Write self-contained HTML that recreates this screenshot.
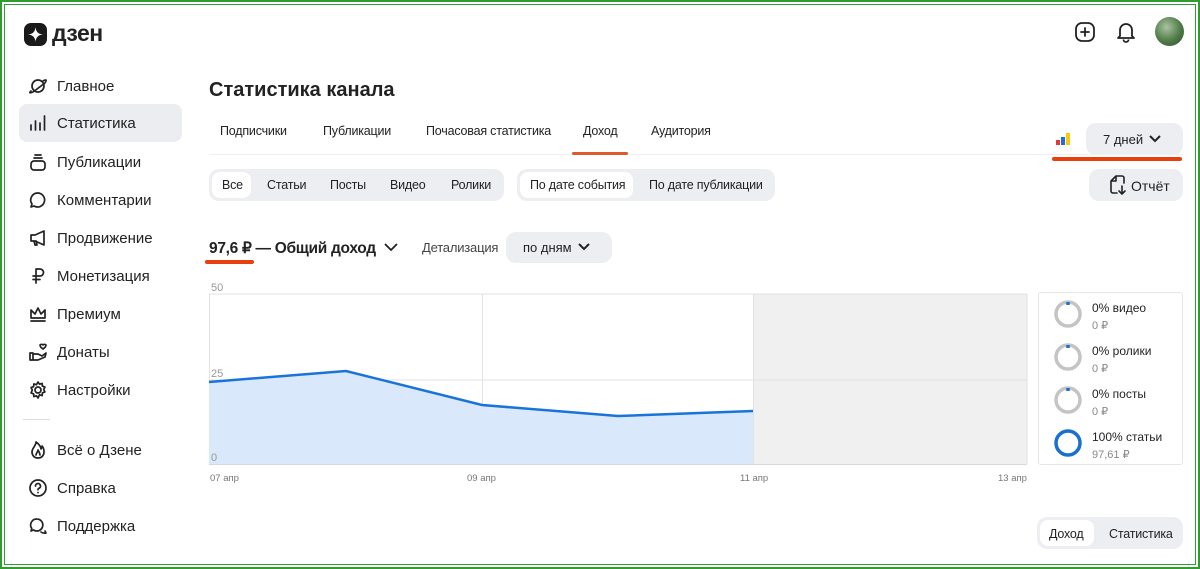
<!DOCTYPE html>
<html><head><meta charset="utf-8">
<style>
*{box-sizing:border-box;margin:0;padding:0}
body{width:1200px;height:569px;overflow:hidden;background:#fff;font-family:"Liberation Sans",sans-serif;color:#222;position:relative}
.frame{position:absolute;inset:0;border:2px solid #2e9e2e}
.frame2{position:absolute;inset:4px;border:1px solid #2e9e2e}
.a{position:absolute;white-space:nowrap}
.nav{position:absolute;left:19px;width:163px;height:38px;display:flex;align-items:center;font-size:15px;color:#222}
.nav svg{position:absolute;left:9px;width:20px;height:20px;fill:none;stroke:#222;stroke-width:1.7;stroke-linecap:round;stroke-linejoin:round}
.nav span{position:absolute;left:38px}
.pill{position:absolute;background:#eceef1;border-radius:10px}
.chip{position:absolute;font-size:12.5px;color:#222;letter-spacing:-0.2px}
.tab{position:absolute;font-size:12.5px;top:124px;letter-spacing:-0.2px}
.w{background:#fff;border-radius:8px}
.s{font-size:11px;color:#888}
</style></head><body>
<div class="frame"></div><div class="frame2"></div>

<div class="a" style="left:24px;top:23px;width:23px;height:23px;background:#1a1a1a;border-radius:7px"></div>
<svg class="a" style="left:24px;top:23px" width="23" height="23" viewBox="0 0 23 23"><path d="M11.5 4 Q12 11 19 11.5 Q12 12 11.5 19 Q11 12 4 11.5 Q11 11 11.5 4Z" fill="#fff"/></svg>
<div class="a" style="left:52px;top:20px;font-size:23px;font-weight:bold;letter-spacing:-0.5px">дзен</div>

<div class="nav" style="top:67px"><svg viewBox="0 0 20 20"><circle cx="10" cy="10" r="6"/><path d="M3 15 Q0 18 5 16 L17 7 Q20 2 15 5"/></svg><span>Главное</span></div>
<div class="nav" style="top:104px;background:#ecedf0;border-radius:8px"><svg viewBox="0 0 20 20"><path d="M3 17v-5M7.5 17v-9M12 17v-7M16.5 17V3"/></svg><span>Статистика</span></div>
<div class="nav" style="top:143px"><svg viewBox="0 0 20 20"><rect x="3" y="9" width="14" height="9" rx="3"/><path d="M6 6h8M7 3h6"/></svg><span>Публикации</span></div>
<div class="nav" style="top:181px"><svg viewBox="0 0 20 20"><path d="M10 3a7 7 0 1 1-4 13l-3 1 1-3A7 7 0 0 1 10 3z"/></svg><span>Комментарии</span></div>
<div class="nav" style="top:219px"><svg viewBox="0 0 20 20"><path d="M3 7h4l9-4v14l-9-4H3zM6 13l1 4h2l-1-4"/></svg><span>Продвижение</span></div>
<div class="nav" style="top:257px"><svg viewBox="0 0 20 20"><path d="M8 17V3h4a3.5 3.5 0 0 1 0 7H5M5 13.5h7"/></svg><span>Монетизация</span></div>
<div class="nav" style="top:295px"><svg viewBox="0 0 20 20"><path d="M3 6l4 4 3-6 3 6 4-4v8H3zM3 17h14"/></svg><span>Премиум</span></div>
<div class="nav" style="top:333px"><svg viewBox="0 0 20 20"><path d="M2 11h3v7H2zM5 12h5l4 2 4-3-1 4-7 3H5M12 3a2 2 0 0 1 3 0 2 2 0 0 1 3 0c0 2-3 4-3 4s-3-2-3-4z"/></svg><span>Донаты</span></div>
<div class="nav" style="top:371px"><svg viewBox="0 0 20 20"><circle cx="10" cy="10" r="3"/><path d="M10 2l1.5 2.2 2.6-.8.3 2.7 2.5 1-1.2 2.4 1.2 2.4-2.5 1-.3 2.7-2.6-.8L10 18l-1.5-2.2-2.6.8-.3-2.7-2.5-1L4.3 10 3.1 7.6l2.5-1 .3-2.7 2.6.8z"/></svg><span>Настройки</span></div>
<div class="a" style="left:23px;top:419px;width:27px;height:1px;background:#ddd"></div>
<div class="nav" style="top:431px"><svg viewBox="0 0 20 20"><path d="M10 18c-4 0-6-3-6-6 0-4 4-6 4-10 3 2 5 5 5 7 1-1 1-2 1-3 2 2 2 4 2 6 0 3-2 6-6 6zM8 15c0-2 2-3 2-5 1 2 2 3 2 5"/></svg><span>Всё о Дзене</span></div>
<div class="nav" style="top:469px"><svg viewBox="0 0 20 20"><circle cx="10" cy="10" r="8"/><path d="M7.5 8a2.5 2.5 0 1 1 3.5 2.3c-.7.3-1 .8-1 1.5M10 14.5v.2"/></svg><span>Справка</span></div>
<div class="nav" style="top:507px"><svg viewBox="0 0 20 20"><path d="M9 3a6 6 0 1 1-3.5 11L3 15l.8-2.5A6 6 0 0 1 9 3zM13 16q2 1.5 5 1l-1-2"/></svg><span>Поддержка</span></div>

<svg class="a" style="left:1074px;top:21px" width="22" height="22" viewBox="0 0 22 22" fill="none" stroke="#222" stroke-width="1.8" stroke-linecap="round"><rect x="2" y="2" width="18" height="18" rx="6"/><path d="M11 7v8M7 11h8"/></svg>
<svg class="a" style="left:1116px;top:21px" width="20" height="22" viewBox="0 0 20 22" fill="none" stroke="#222" stroke-width="1.8" stroke-linejoin="round"><path d="M4 15V9a6 6 0 0 1 12 0v6l2 2H2z M7.5 18.5a2.5 2.5 0 0 0 5 0"/></svg>
<div class="a" style="left:1155px;top:17px;width:29px;height:29px;border-radius:50%;background:radial-gradient(circle at 40% 35%,#a9c3a1,#4f7a47 55%,#2e4f2a)"></div>

<div class="a" style="left:209px;top:79px;font-size:20px;font-weight:bold">Статистика канала</div>
<div class="tab" style="left:220px">Подписчики</div>
<div class="tab" style="left:323px">Публикации</div>
<div class="tab" style="left:426px">Почасовая статистика</div>
<div class="tab" style="left:583px">Доход</div>
<div class="tab" style="left:651px">Аудитория</div>
<div class="a" style="left:209px;top:154px;width:976px;height:1px;background:#f0f0f0"></div>
<div class="a" style="left:572px;top:152px;width:56px;height:3px;background:#dd5a2a;border-radius:2px"></div>

<svg class="a" style="left:1055px;top:131px" width="16" height="16" viewBox="0 0 16 16"><rect x="1" y="9" width="4" height="5" fill="#e53935"/><rect x="6" y="6" width="4" height="8" fill="#1e6fd9"/><rect x="11" y="2" width="4" height="12" fill="#f9c80e"/></svg>
<div class="pill" style="left:1086px;top:123px;width:97px;height:32px"></div>
<div class="a" style="left:1103px;top:132px;font-size:13px">7 дней</div>
<svg class="a" style="left:1149px;top:134px" width="12" height="9" viewBox="0 0 12 9" fill="none" stroke="#222" stroke-width="2"><path d="M1 2l5 5 5-5"/></svg>
<div class="a" style="left:1052px;top:157px;width:130px;height:4px;background:#e8400c;border-radius:2px"></div>

<div class="pill" style="left:209px;top:169px;width:295px;height:32px"></div>
<div class="a w" style="left:212px;top:172px;width:39px;height:26px"></div>
<div class="chip" style="left:222px;top:178px">Все</div>
<div class="chip" style="left:267px;top:178px">Статьи</div>
<div class="chip" style="left:330px;top:178px">Посты</div>
<div class="chip" style="left:390px;top:178px">Видео</div>
<div class="chip" style="left:451px;top:178px">Ролики</div>
<div class="pill" style="left:517px;top:169px;width:258px;height:32px"></div>
<div class="a w" style="left:520px;top:172px;width:113px;height:26px"></div>
<div class="chip" style="left:530px;top:178px">По дате события</div>
<div class="chip" style="left:649px;top:178px">По дате публикации</div>

<div class="pill" style="left:1089px;top:169px;width:94px;height:32px"></div>
<svg class="a" style="left:1108px;top:174px" width="20" height="22" viewBox="0 0 20 22" fill="none" stroke="#222" stroke-width="1.6" stroke-linecap="round" stroke-linejoin="round"><path d="M9 19H5a2 2 0 0 1-2-2V7l5-5h6a2 2 0 0 1 2 2v5M8 2v5H3M14 12v8M11 17l3 3 3-3"/></svg>
<div class="a" style="left:1131px;top:178px;font-size:14px">Отчёт</div>

<div class="a" style="left:209px;top:239px;font-size:15.5px;font-weight:bold;letter-spacing:-0.3px">97,6 ₽ — Общий доход</div>
<svg class="a" style="left:384px;top:242px" width="14" height="10" viewBox="0 0 14 10" fill="none" stroke="#222" stroke-width="1.8"><path d="M1 2l6 6 6-6"/></svg>
<div class="a" style="left:205px;top:260px;width:49px;height:4px;background:#e8400c;border-radius:2px"></div>
<div class="a" style="left:422px;top:240px;font-size:13px;color:#444;letter-spacing:-0.2px">Детализация</div>
<div class="pill" style="left:506px;top:232px;width:106px;height:31px"></div>
<div class="a" style="left:523px;top:240px;font-size:13px">по дням</div>
<svg class="a" style="left:578px;top:242px" width="12" height="9" viewBox="0 0 12 9" fill="none" stroke="#222" stroke-width="2"><path d="M1 2l5 5 5-5"/></svg>

<svg class="a" style="left:200px;top:280px" width="840" height="210" viewBox="200 280 840 210">
<rect x="753" y="294" width="274" height="170" fill="#f0f0f0"/>
<line x1="209" y1="294" x2="1027" y2="294" stroke="#e2e2e2"/>
<line x1="209" y1="380" x2="1027" y2="380" stroke="#e2e2e2"/>
<line x1="209.5" y1="294" x2="209.5" y2="464" stroke="#e2e2e2"/>
<line x1="482.5" y1="294" x2="482.5" y2="464" stroke="#e2e2e2"/>
<line x1="753.5" y1="294" x2="753.5" y2="464" stroke="#e2e2e2"/>
<line x1="1027" y1="294" x2="1027" y2="464" stroke="#e2e2e2"/>
<path d="M209 382 L346 371 L482 405 L618 416 L753 411 L753 464 L209 464Z" fill="#d9e9fb"/>
<path d="M209 382 L346 371 L482 405 L618 416 L753 411" fill="none" stroke="#1a73d9" stroke-width="2.5"/>
<line x1="209" y1="464.5" x2="1027" y2="464.5" stroke="#d8d8d8"/>
<text x="211" y="291" font-size="11" fill="#999" font-family="Liberation Sans">50</text>
<text x="211" y="377" font-size="11" fill="#999" font-family="Liberation Sans">25</text>
<text x="211" y="461" font-size="11" fill="#999" font-family="Liberation Sans">0</text>
<text x="210" y="481" font-size="9.5" fill="#777" font-family="Liberation Sans">07 апр</text>
<text x="467" y="481" font-size="9.5" fill="#777" font-family="Liberation Sans">09 апр</text>
<text x="740" y="481" font-size="9.5" fill="#777" font-family="Liberation Sans">11 апр</text>
<text x="998" y="481" font-size="9.5" fill="#777" font-family="Liberation Sans">13 апр</text>
</svg>

<div class="a" style="left:1038px;top:292px;width:145px;height:173px;border:1px solid #e6e6e6;border-radius:3px"></div>
<svg class="a" style="left:1050px;top:296px" width="36" height="166" viewBox="0 0 36 166" fill="none" stroke-width="3.5">
<circle cx="18" cy="18" r="12" stroke="#c4c4c4"/><path d="M18 6v3" stroke="#1a6fd0"/>
<circle cx="18" cy="61" r="12" stroke="#c4c4c4"/><path d="M18 49v3" stroke="#1a6fd0"/>
<circle cx="18" cy="104" r="12" stroke="#c4c4c4"/><path d="M18 92v3" stroke="#1a6fd0"/>
<circle cx="18" cy="147" r="12" stroke="#1a6fd0"/>
</svg>
<div class="a" style="left:1092px;top:301px;font-size:12px">0% видео</div><div class="a s" style="left:1092px;top:319px">0 ₽</div>
<div class="a" style="left:1092px;top:344px;font-size:12px">0% ролики</div><div class="a s" style="left:1092px;top:362px">0 ₽</div>
<div class="a" style="left:1092px;top:387px;font-size:12px">0% посты</div><div class="a s" style="left:1092px;top:405px">0 ₽</div>
<div class="a" style="left:1092px;top:430px;font-size:12px">100% статьи</div><div class="a s" style="left:1092px;top:448px">97,61 ₽</div>

<div class="pill" style="left:1037px;top:517px;width:146px;height:32px"></div>
<div class="a w" style="left:1040px;top:520px;width:54px;height:26px"></div>
<div class="chip" style="left:1049px;top:527px">Доход</div>
<div class="chip" style="left:1109px;top:527px">Статистика</div>
</body></html>
